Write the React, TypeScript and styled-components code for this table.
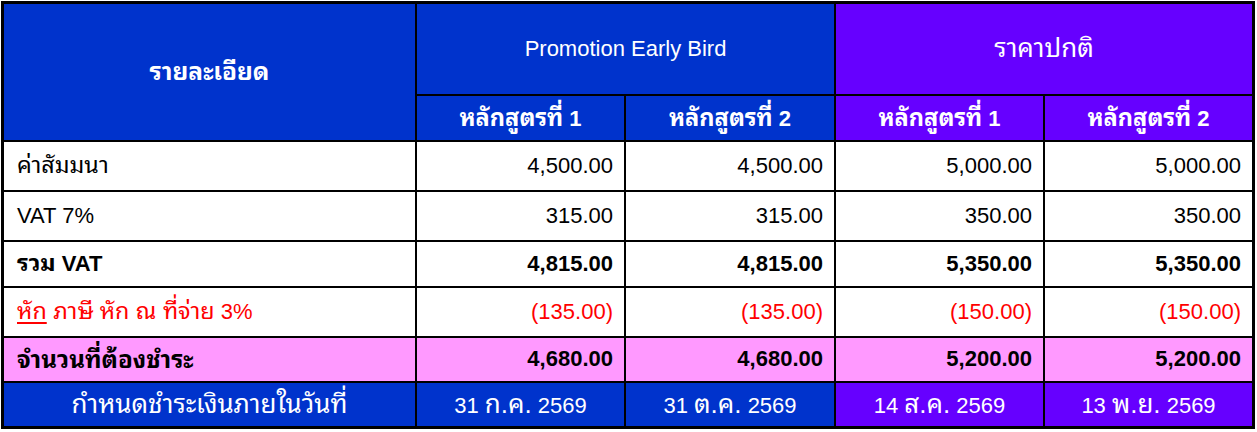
import React from "react";
import styled, { createGlobalStyle, css } from "styled-components";

const Global = createGlobalStyle`
  html, body { margin: 0; padding: 0; background: #ffffff; }
  body { font-family: "Liberation Sans", "Noto Sans Thai Looped", "Noto Sans Thai", "DejaVu Sans", Arial, sans-serif; }
`;

const BLUE = "#0033cc";
const PURPLE = "#6600ff";
const PINK = "#ff99ff";
const RED = "#ff0000";

const Page = styled.div`
  padding: 1px;
`;

const Grid = styled.div`
  display: grid;
  grid-template-columns: 411px 207px 208px 207px 207px;
  grid-template-rows: 90px 44px 48px 48px 44px 48px 43px 43px;
  gap: 2px;
  width: max-content;
  background: #000000;
  border: 3px solid #000000;
`;

type Tone = "blue" | "purple" | "white" | "pink";

const toneBg: Record<Tone, string> = {
  blue: BLUE,
  purple: PURPLE,
  white: "#ffffff",
  pink: PINK,
};

const Cell = styled.div<{
  $tone?: Tone;
  $align?: "left" | "right" | "center";
  $bold?: boolean;
  $red?: boolean;
  $span?: string;
  $rowSpan?: string;
}>`
  display: flex;
  align-items: center;
  justify-content: ${(p) =>
    p.$align === "right" ? "flex-end" : p.$align === "center" ? "center" : "flex-start"};
  padding: ${(p) => (p.$align === "right" ? "0 11px 0 0" : p.$align === "center" ? "0" : "0 0 0 13px")};
  background: ${(p) => toneBg[p.$tone || "white"]};
  color: ${(p) =>
    p.$red ? RED : p.$tone === "blue" || p.$tone === "purple" ? "#ffffff" : "#000000"};
  font-size: 22px;
  line-height: 1.2;
  font-weight: ${(p) => (p.$bold ? 700 : 400)};
  white-space: nowrap;
  ${(p) => p.$span && css`grid-column: ${p.$span};`}
  ${(p) => p.$rowSpan && css`grid-row: ${p.$rowSpan};`}
`;

const Text = styled.span`
  white-space: pre;
`;

/* Thai run: the Thai face is scaled so its width matches the reference */
const T = styled.span<{ $scale?: number }>`
  font-size: ${(p) => p.$scale ?? 1.06}em;
`;

const Under = styled.span`
  text-decoration: underline;
  text-underline-offset: 3px;
`;

type Row = {
  label: React.ReactNode;
  values: string[];
  bold?: boolean;
  red?: boolean;
  tone?: Tone;
};

const rows: Row[] = [
  { label: <T>ค่าสัมมนา</T>, values: ["4,500.00", "4,500.00", "5,000.00", "5,000.00"] },
  { label: "VAT 7%", values: ["315.00", "315.00", "350.00", "350.00"] },
  {
    label: (
      <>
        <T>รวม</T> VAT
      </>
    ),
    values: ["4,815.00", "4,815.00", "5,350.00", "5,350.00"],
    bold: true,
  },
  {
    label: (
      <>
        <Under>
          <T>หัก</T>
        </Under>
        <T> ภาษี หัก ณ ที่จ่าย</T> 3%
      </>
    ),
    values: ["(135.00)", "(135.00)", "(150.00)", "(150.00)"],
    red: true,
  },
  {
    label: <T $scale={1.1}>จำนวนที่ต้องชำระ</T>,
    values: ["4,680.00", "4,680.00", "5,200.00", "5,200.00"],
    bold: true,
    tone: "pink",
  },
];

const dates: [string, string, string][] = [
  ["31 ", "ก.ค.", " 2569"],
  ["31 ", "ต.ค.", " 2569"],
  ["14 ", "ส.ค.", " 2569"],
  ["13 ", "พ.ย.", " 2569"],
];

const Course = ({ n }: { n: number }) => (
  <Text>
    <T $scale={1.07}>หลักสูตรที่</T> {n}
  </Text>
);

export default function App() {
  return (
    <Page>
      <Global />
      <Grid>
        <Cell $tone="blue" $align="center" $bold $rowSpan="1 / span 2">
          <T $scale={1.11}>รายละเอียด</T>
        </Cell>
        <Cell $tone="blue" $align="center" $span="2 / span 2">
          Promotion Early Bird
        </Cell>
        <Cell $tone="purple" $align="center" $span="4 / span 2">
          <T $scale={1.18}>ราคาปกติ</T>
        </Cell>
        <Cell $tone="blue" $align="center" $bold>
          <Course n={1} />
        </Cell>
        <Cell $tone="blue" $align="center" $bold>
          <Course n={2} />
        </Cell>
        <Cell $tone="purple" $align="center" $bold>
          <Course n={1} />
        </Cell>
        <Cell $tone="purple" $align="center" $bold>
          <Course n={2} />
        </Cell>

        {rows.map((r, i) => (
          <React.Fragment key={i}>
            <Cell $tone={r.tone} $bold={r.bold} $red={r.red}>
              <Text>{r.label}</Text>
            </Cell>
            {r.values.map((v, j) => (
              <Cell key={j} $tone={r.tone} $align="right" $bold={r.bold} $red={r.red}>
                {v}
              </Cell>
            ))}
          </React.Fragment>
        ))}

        <Cell $tone="blue" $align="center">
          <T $scale={1.18}>กำหนดชำระเงินภายในวันที่</T>
        </Cell>
        {dates.map((d, j) => (
          <Cell key={j} $tone={j < 2 ? "blue" : "purple"} $align="center">
            <Text>
              {d[0]}
              <T $scale={1.18}>{d[1]}</T>
              {d[2]}
            </Text>
          </Cell>
        ))}
      </Grid>
    </Page>
  );
}
